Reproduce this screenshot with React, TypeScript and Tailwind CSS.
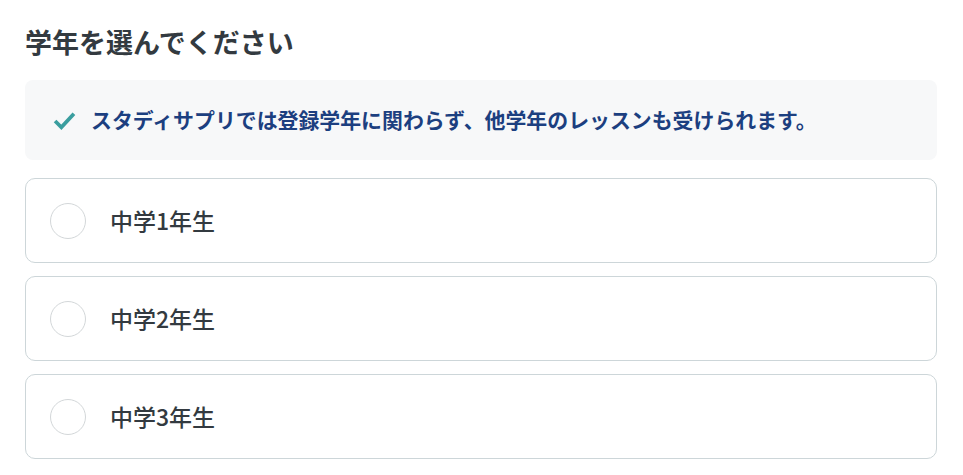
const grades = ['中学1年生', '中学2年生', '中学3年生'];

export default function App() {
  return (
    <div
      className="w-[963px] h-[475px] bg-white px-[25px] pt-[24px] text-[#333]"
      style={{ fontFamily: '"Noto Sans CJK JP", "Noto Sans", sans-serif' }}
    >
      <h1 className="text-[27px] leading-[38px] -mt-[1px] font-bold text-[#333a40]">学年を選んでください</h1>

      {/* Info note */}
      <div className="mt-[19px] w-[912px] h-[80px] rounded-[8px] bg-[#f7f8f9] flex items-center pl-[28px]">
        <svg width="23" height="19" viewBox="0 0 22 18" fill="none" className="shrink-0">
          <path d="M2 9.5 L8 15.5 L20 2.5" stroke="#3a9e9f" strokeWidth="3.6" strokeLinecap="butt" strokeLinejoin="miter" />
        </svg>
        <p className="ml-[15px] text-[20.9px] font-bold text-[#1c3f80]">
          スタディサプリでは登録学年に関わらず、他学年のレッスンも受けられます。
        </p>
      </div>

      {/* Grade options */}
      <div className="mt-[18px] flex flex-col gap-[13px] w-[912px]">
        {grades.map((g) => (
          <label
            key={g}
            className="h-[85px] rounded-[10px] border border-[#cdd6d9] bg-white flex items-center pl-[24px] cursor-pointer"
          >
            <span className="w-[36px] h-[36px] rounded-full border border-[#d3d7d9] bg-white shrink-0" />
            <span className="ml-[24px] text-[23px] font-medium text-[#333a40]">{g}</span>
          </label>
        ))}
      </div>
    </div>
  );
}
